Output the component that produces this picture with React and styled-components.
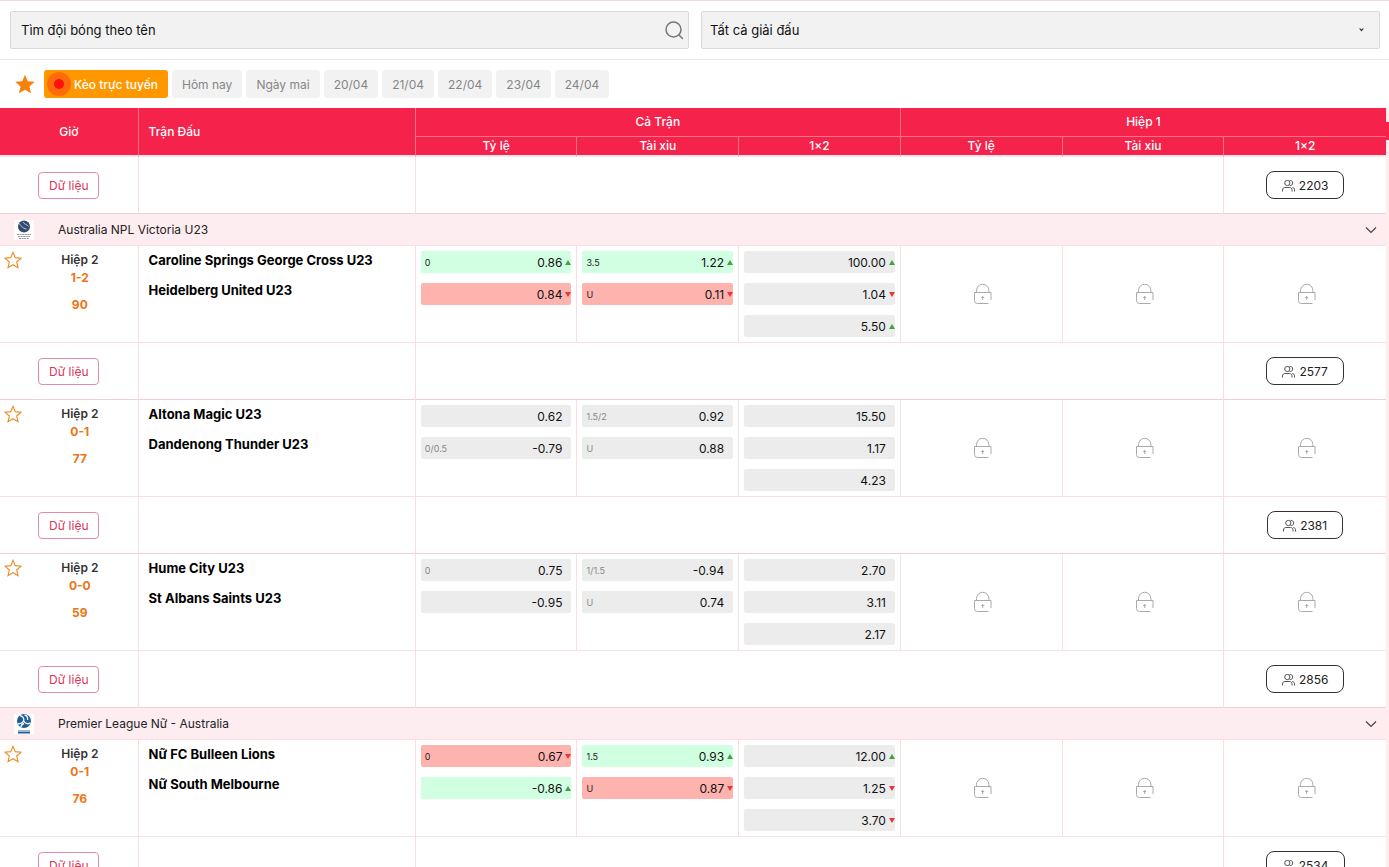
import { useState } from "react";
import styled, { createGlobalStyle, css } from "styled-components";

const days = ["Hôm nay", "Ngày mai", "20/04", "21/04", "22/04", "23/04", "24/04"];

const leagues = [
  {
    name: "Australia NPL Victoria U23",
    logo: "npl",
    matches: [
      {
        home: "Caroline Springs George Cross U23",
        away: "Heidelberg United U23",
        score: "1-2",
        minute: "90",
        viewers: 2577,
        odds: [
          [["0", "0.86", "up", true], ["", "0.84", "down", true]],
          [["3.5", "1.22", "up", true], ["U", "0.11", "down", true]],
          [["", "100.00", "up"], ["", "1.04", "down"], ["", "5.50", "up"]],
        ],
      },
      {
        home: "Altona Magic U23",
        away: "Dandenong Thunder U23",
        score: "0-1",
        minute: "77",
        viewers: 2381,
        odds: [
          [["", "0.62"], ["0/0.5", "-0.79"]],
          [["1.5/2", "0.92"], ["U", "0.88"]],
          [["", "15.50"], ["", "1.17"], ["", "4.23"]],
        ],
      },
      {
        home: "Hume City U23",
        away: "St Albans Saints U23",
        score: "0-0",
        minute: "59",
        viewers: 2856,
        odds: [
          [["0", "0.75"], ["", "-0.95"]],
          [["1/1.5", "-0.94"], ["U", "0.74"]],
          [["", "2.70"], ["", "3.11"], ["", "2.17"]],
        ],
      },
    ],
  },
  {
    name: "Premier League Nữ - Australia",
    logo: "premier",
    matches: [
      {
        home: "Nữ FC Bulleen Lions",
        away: "Nữ South Melbourne",
        score: "0-1",
        minute: "76",
        viewers: 2534,
        odds: [
          [["0", "0.67", "down", true], ["", "-0.86", "up", true]],
          [["1.5", "0.93", "up", true], ["U", "0.87", "down", true]],
          [["", "12.00", "up"], ["", "1.25", "down"], ["", "3.70", "down"]],
        ],
      },
    ],
  },
];

const STAR = "M12 1.8l3 7.1 7.7.7-5.8 5.1 1.7 7.5-6.6-4-6.6 4 1.7-7.5-5.8-5.1 7.7-.7z";

function StarIcon({ size, filled }) {
  return (
    <svg width={size} height={size} viewBox={filled ? "1 1 22 22" : "0 0 24 24"} aria-hidden="true">
      <path d={STAR} fill={filled ? "#f5820d" : "none"} stroke="#ee8a25" strokeWidth={filled ? 0 : 1.5} strokeLinejoin="miter" />
    </svg>
  );
}

function SearchIcon() {
  return (
    <svg width="20" height="20" viewBox="0 0 20 20" fill="none" stroke="#777" strokeWidth="1.5" strokeLinecap="round" aria-hidden="true">
      <circle cx="9.5" cy="9.5" r="7.5" />
      <path d="M15 15l3.5 3.5" />
    </svg>
  );
}

function LockIcon() {
  return (
    <svg width="18" height="22" viewBox="0 0 18 22" fill="none" stroke="#aaa" aria-label="Khóa" role="img">
      <path d="M2.5 9.5V7.500a6.200 6.200 0 0 1 12.400 0v2" />
      <path d="M14.500 20.500h-11a3 3 0 0 1-3-3v-8h16.500v7.500" />
      <path d="M8.700 13v4M7.200 14.500h3" />
    </svg>
  );
}

function UsersIcon() {
  return (
    <svg width="13" height="13" viewBox="0 0 13 13" fill="none" stroke="#555" aria-hidden="true">
      <circle cx="5.300" cy="4" r="2.600" />
      <path d="M7.500 1.600c1.800-.6 3.200.7 3.200 2.400s-1.400 3-3.200 2.400" />
      <path d="M.5 12.500v-1.500C.5 9.300 1.800 8.500 3 8.500h4.500c1.500 0 2.500 1 2.500 2.300v1.700M10.300 8.500c1.400.1 2.200 1 2.200 2.300v1.700" />
    </svg>
  );
}

function ChevronIcon() {
  return (
    <svg width="12" height="8" viewBox="0 0 12 8" fill="none" stroke="#444" strokeWidth="1.200" aria-hidden="true">
      <path d="M1 1.500l5 5 5-5" />
    </svg>
  );
}

function LeagueLogo({ kind }) {
  if (kind === "npl") {
    return (
      <svg width="20" height="20" viewBox="0 0 20 20" aria-hidden="true">
        <rect width="20" height="20" fill="#fff" />
        <circle cx="10" cy="6.500" r="6" fill="#34496e" />
        <path d="M5 3.500c2.500 2 3 5 7.500 5.500M9 2c1 2.500 4 2 5.500 4.500" stroke="#b9c8dc" fill="none" />
        <path d="M3 14.500h14M4 16.500h12M5 18.500h10" stroke="#8d929c" strokeDasharray="2 .6" />
      </svg>
    );
  }
  return (
    <svg width="20" height="20" viewBox="0 0 20 20" aria-hidden="true">
      <rect width="20" height="20" fill="#fff" />
      <circle cx="10" cy="7" r="7" fill="#1f5c94" />
      <path d="M6 1.500c3 1 4.500 3 3.500 5.500S5 10 3.500 9.500M9.500 6.500c1.500 3 4 4 7 2.500M10.500 1c2 .5 3.500 2.500 3 5M7 13c0-2 1.500-3 3-3.500" stroke="#e8f3fb" strokeWidth="1.400" fill="none" />
      <path d="M4 16.500h12" stroke="#a6bdd1" />
      <path d="M4 18.500h12" stroke="#285f8f" strokeWidth="2" />
    </svg>
  );
}

function Odd({ data }) {
  const [label, value, trend, changed] = data;
  return (
    <OddButton type="button" $tone={changed ? trend : "none"}>
      <OddLabel $active={changed}>{label}</OddLabel>
      <OddValue>{value}</OddValue>
      <Trend>
        {trend && (
          <svg width="6" height="5" viewBox="0 0 6 5" aria-hidden="true">
            <path d={trend === "up" ? "M3 0l3 5H0z" : "M0 0h6L3 5z"} fill={trend === "up" ? "#43a047" : "#e53935"} />
          </svg>
        )}
      </Trend>
    </OddButton>
  );
}

function DataRow({ viewers }) {
  return (
    <tr>
      <DataCell>
        <DataButton type="button">Dữ liệu</DataButton>
      </DataCell>
      <DataCell />
      <DataCell colSpan={5} />
      <DataCell>
        <Viewers type="button">
          <UsersIcon />
          {viewers}
        </Viewers>
      </DataCell>
    </tr>
  );
}

function MatchRow({ match }) {
  return (
    <tr>
      <Cell>
        <TimeBox>
          <IconButton type="button" aria-label="Yêu thích">
            <StarIcon size={18} />
          </IconButton>
          <Time>
            <Period>Hiệp 2</Period>
            <Score>{match.score}</Score>
            <span>{match.minute}</span>
          </Time>
        </TimeBox>
      </Cell>
      <Cell>
        <Teams>
          <span>{match.home}</span>
          <span>{match.away}</span>
        </Teams>
      </Cell>
      {match.odds.map((list, i) => (
        <Cell key={i}>
          <OddList>
            {list.map((odd, j) => (
              <Odd key={j} data={odd} />
            ))}
          </OddList>
        </Cell>
      ))}
      {[0, 1, 2].map((i) => (
        <LockCell key={i}>
          <LockIcon />
        </LockCell>
      ))}
    </tr>
  );
}

export default function App() {
  const [team, setTeam] = useState("");
  const [day, setDay] = useState("live");

  return (
    <Page>
      <GlobalStyle />
      <Filters>
        <SearchBox>
          <SearchInput
            aria-label="Tìm đội bóng theo tên"
            placeholder="Tìm đội bóng theo tên"
            value={team}
            onChange={(e) => setTeam(e.target.value)}
          />
          <SearchIcon />
        </SearchBox>
        <SelectBox>
          <LeagueSelect aria-label="Giải đấu">
            <option>Tất cả giải đấu</option>
          </LeagueSelect>
          <Caret width="5" height="4" viewBox="0 0 5 4" aria-hidden="true">
            <path d="M0 .5h1.500l1 1 1-1H5L2.500 3.500z" fill="#333" />
          </Caret>
        </SelectBox>
      </Filters>
      <Days>
        <IconButton type="button" aria-label="Yêu thích">
          <StarIcon size={20} filled />
        </IconButton>
        <DayList>
          <LiveButton type="button" onClick={() => setDay("live")}>
            <LiveDot />
            Kèo trực tuyến
          </LiveButton>
          {days.map((d) => (
            <DayButton key={d} type="button" aria-pressed={day === d} onClick={() => setDay(d)}>
              {d}
            </DayButton>
          ))}
        </DayList>
      </Days>
      <Board>
        <Table>
          <colgroup>
            <Col $w={10} />
            <Col $w={20} />
            <Col />
            <Col />
            <Col />
            <Col />
            <Col />
            <Col />
          </colgroup>
          <thead>
            <tr>
              <Head rowSpan={2} $bottom>Giờ</Head>
              <Head rowSpan={2} $bottom $left>Trận Đấu</Head>
              <Head colSpan={3} $tall>Cả Trận</Head>
              <Head colSpan={3} $tall>Hiệp 1</Head>
            </tr>
            <tr>
              {["Tỷ lệ", "Tài xỉu", "1×2", "Tỷ lệ", "Tài xỉu", "1×2"].map((h, i) => (
                <Head key={i} $bottom>{h}</Head>
              ))}
            </tr>
          </thead>
          <tbody>
            <DataRow viewers={2203} />
          </tbody>
          {leagues.map((league) => (
            <tbody key={league.name}>
              <tr>
                <LeagueCell colSpan={8}>
                  <LeagueBar>
                    <LeagueLogo kind={league.logo} />
                    <LeagueName>{league.name}</LeagueName>
                    <IconButton type="button" aria-label="Thu gọn">
                      <ChevronIcon />
                    </IconButton>
                  </LeagueBar>
                </LeagueCell>
              </tr>
              {league.matches.map((m) => [
                <MatchRow key={m.home} match={m} />,
                <DataRow key={m.home + "-data"} viewers={m.viewers} />,
              ])}
            </tbody>
          ))}
        </Table>
        <Rail>
          <Thumb />
        </Rail>
      </Board>
    </Page>
  );
}

const GlobalStyle = createGlobalStyle`
  * {
    box-sizing: border-box;
  }
  body {
    margin: 0;
    background: #ffffff;
    font-family: Inter, "Liberation Sans", sans-serif;
    font-size: 12px;
    color: #222222;
  }
  button, input, select {
    font: inherit;
    color: inherit;
    margin: 0;
  }
  button {
    cursor: pointer;
  }
  svg {
    display: block;
    flex-shrink: 0;
  }
`;
const Page = styled.div`
  height: 100vh;
  overflow: hidden;
  border-top: 1px solid #f3d5dc;
`;
const Filters = styled.div`
  display: grid;
  grid-template-columns: 1fr 1fr;
  gap: 12px;
  padding: 10px 9px 10px 10px;
  border-bottom: 1px solid #e6e6e6;
  font-size: 13px;
`;
const field = css`
  height: 38px;
  background: #f2f2f2;
  border: 1px solid #d9d9d9;
  border-radius: 2px;
`;
const SearchBox = styled.div`
  ${field}
  display: flex;
  align-items: center;
  padding-right: 4px;
`;
const SearchInput = styled.input`
  flex: 1;
  height: 100%;
  padding: 0 10px;
  border: 0;
  outline: 0;
  background: none;
  &::placeholder {
    color: #111111;
    opacity: 1;
  }
`;
const SelectBox = styled.div`
  position: relative;
`;
const LeagueSelect = styled.select`
  ${field}
  width: 100%;
  padding: 0 8px;
  color: #111111;
  appearance: none;
`;
const Caret = styled.svg`
  position: absolute;
  right: 16px;
  top: 17px;
`;
const Days = styled.div`
  display: flex;
  align-items: center;
  gap: 9px;
  padding: 10px 15px;
`;
const DayList = styled.div`
  display: flex;
  gap: 4px;
`;
const DayButton = styled.button`
  height: 28px;
  padding: 0 10px;
  border: 0;
  border-radius: 3px;
  background: #f2f2f2;
  color: #868686;
`;
const LiveButton = styled(DayButton)`
  display: flex;
  align-items: center;
  gap: 3px;
  padding: 0 10px 0 3px;
  background: #ff9800;
  color: #ffffff;
  font-weight: 500;
`;
const LiveDot = styled.span`
  width: 24px;
  height: 24px;
  border: 7px solid #ff6a0a;
  border-radius: 50%;
  background: #ff0f0f;
`;
const IconButton = styled.button`
  padding: 0;
  border: 0;
  background: none;
`;
const Board = styled.div`
  display: flex;
`;
const Rail = styled.div`
  flex: 0 0 3px;
  background: #ffecef;
`;
const Thumb = styled.div`
  height: 18px;
  margin-top: 14px;
  background: #f5224b;
`;
const Table = styled.table`
  width: 100%;
  min-width: 0;
  table-layout: fixed;
  border-collapse: separate;
  border-spacing: 0;
`;
const Col = styled.col`
  width: ${(p) => (p.$w ? p.$w + "%" : "auto")};
`;
const Head = styled.th`
  height: ${(p) => (p.$tall ? 29 : 20)}px;
  padding: ${(p) => (p.$left ? "0 10px" : "0")};
  background: #f5224b;
  border-right: 1px solid #f9718a;
  border-bottom: ${(p) => (p.$bottom ? "2px solid #fde3e8" : "1px solid #f9718a")};
  color: #ffffff;
  font-weight: 500;
  line-height: 16px;
  text-align: ${(p) => (p.$left ? "left" : "center")};
  background-clip: padding-box;
  &:last-child {
    border-right: 0;
  }
`;
const Cell = styled.td`
  height: 97px;
  padding: 0;
  vertical-align: top;
  border-right: 1px solid #fbdde2;
  border-bottom: 1px solid #fbdde2;
  &:last-child {
    border-right: 0;
  }
`;
const LockCell = styled(Cell)`
  padding-left: 4px;
  vertical-align: middle;
  svg {
    margin: 0 auto;
  }
`;
const DataCell = styled(Cell)`
  height: 57px;
  text-align: center;
  vertical-align: middle;
  border-bottom-color: #f3ccd5;
`;
const DataButton = styled.button`
  height: 27px;
  padding: 0 10px;
  border: 1px solid #e58ba3;
  border-radius: 4px;
  background: #ffffff;
  color: #dc3559;
`;
const Viewers = styled.button`
  display: inline-flex;
  align-items: center;
  gap: 4px;
  height: 28px;
  padding: 0 15px;
  border: 1px solid #333333;
  border-radius: 8px;
  background: #ffffff;
  vertical-align: middle;
`;
const LeagueCell = styled.td`
  height: 32px;
  padding: 0;
  background: #feedf0;
  border-bottom: 1px solid #fbdde2;
`;
const LeagueBar = styled.div`
  display: flex;
  align-items: center;
  padding: 0 9px 0 14px;
`;
const LeagueName = styled.span`
  flex: 1;
  margin-left: 24px;
`;
const TimeBox = styled.div`
  display: flex;
  align-items: flex-start;
  padding: 5px 0 0 4px;
`;
const Time = styled.div`
  flex: 1;
  display: flex;
  flex-direction: column;
  text-align: center;
  font-weight: 700;
  line-height: 18px;
  color: #ee7414;
`;
const Period = styled.span`
  font-weight: 600;
  color: #333333;
`;
const Score = styled.span`
  margin-bottom: 9px;
`;
const Teams = styled.div`
  display: flex;
  flex-direction: column;
  gap: 12px;
  padding: 5px 10px;
  font-size: 13px;
  font-weight: 700;
  line-height: 18px;
  color: #000000;
`;
const OddList = styled.div`
  display: flex;
  flex-direction: column;
  gap: 10px;
  padding: 5px;
`;
const tones = { up: "#d1ffe2", down: "#ffb3af", none: "#ececec" };
const OddButton = styled.button`
  display: flex;
  align-items: center;
  height: 22px;
  padding: 0 0 0 4px;
  border: 0;
  border-radius: 2px;
  background: ${(p) => tones[p.$tone]};
`;
const OddLabel = styled.span`
  flex: 1;
  text-align: left;
  font-size: 9px;
  color: ${(p) => (p.$active ? "#222222" : "#888888")};
`;
const OddValue = styled.span`
  color: #111111;
`;
const Trend = styled.span`
  display: flex;
  justify-content: flex-end;
  width: 9px;
`;
